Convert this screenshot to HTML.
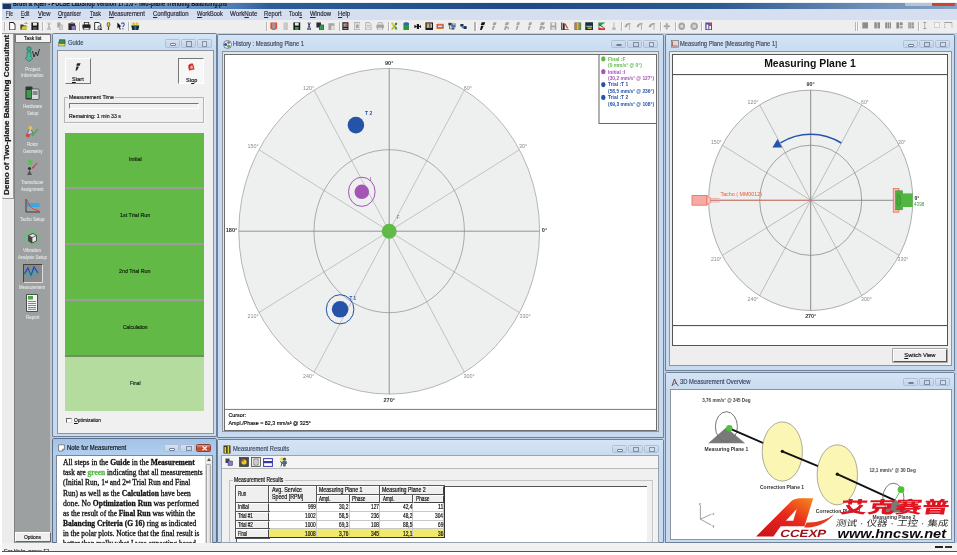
<!DOCTYPE html><html><head><meta charset="utf-8"><title>PULSE LabShop</title><style>
html,body{margin:0;padding:0;background:#fff;}
body{width:957px;height:555px;overflow:hidden;position:relative;font-family:"Liberation Sans",sans-serif;font-size:6px;color:#222;}
.a{position:absolute;}
.t{position:absolute;white-space:nowrap;line-height:1;-webkit-text-stroke:0.18px currentColor;}
#app{position:absolute;left:2px;top:2px;width:955px;height:550px;background:#f0f0f0;overflow:hidden;filter:blur(0.35px);}
#title{left:0;top:0.5px;width:955px;height:6px;background:linear-gradient(90deg,#6c98ca 0%,#6690c4 20%,#4c7ab4 24.5%,#2c5c9a 28%,#1e4a86 55%,#2c5a92 75%,#6a8cb6 90%,#86a2c4 100%);overflow:hidden;}
#menu{left:0;top:6.5px;width:955px;height:11px;background:#d6dff0;}
#menu .t{top:2.2px;font-size:6.2px;color:#1a1a2a;}
#tb{left:0;top:17.5px;width:955px;height:14px;background:#eeeeee;}
#mdi{left:49px;top:31px;width:906px;height:510px;background:#bccfe6;}
.win{position:absolute;background:#c7daef;border:1px solid #6f8197;box-sizing:border-box;border-radius:2px 2px 0 0;}
.win .cap{position:absolute;left:0;right:0;top:0;height:16px;background:linear-gradient(180deg,#d5e4f5 0%,#c9dcf0 100%);}
.win .ttl{position:absolute;left:15px;top:6.5px;font-size:6.2px;color:#44506a;white-space:nowrap;line-height:1;}
.cb{position:absolute;top:5px;width:15px;height:8.6px;border:0.7px solid #aebfd7;background:linear-gradient(180deg,#d3e1f2,#c2d3e8);box-sizing:border-box;border-radius:1.5px;}
.cl{position:absolute;box-sizing:border-box;border:1px solid #8a8f96;background:#fff;}
</style></head><body><div id="app">
<div id="title" class="a"><div class="t" style="left:10.5px;top:-2.2px;font-size:7.20px;color:#0a1020;font-weight:bold;transform:scaleX(0.766);transform-origin:0 0;text-shadow:0 0 1.5px rgba(215,228,245,0.7);">Brüel &amp; Kjær - PULSE LabShop Version 17.1.0 - Two-plane Trending Balancing.pls</div><div class="a" style="left:0.5px;top:1px;width:8px;height:6px;background:#1d3560;"></div><div class="a" style="left:903px;top:0;width:27px;height:3.2px;background:#b4c4da;border-radius:0 0 1px 1px;"></div><div class="a" style="left:930px;top:0;width:23px;height:3.2px;background:#c8472f;border-radius:0 0 1px 1px;"></div></div>
<div id="menu" class="a"><div class="t" style="left:3.5px;top:2.1px;font-size:6.60px;color:#2a2a3a;transform:scaleX(0.658);transform-origin:0 0;"><u>F</u>ile</div><div class="t" style="left:19.3px;top:2.1px;font-size:6.60px;color:#2a2a3a;transform:scaleX(0.730);transform-origin:0 0;"><u>E</u>dit</div><div class="t" style="left:35.6px;top:2.1px;font-size:6.60px;color:#2a2a3a;transform:scaleX(0.874);transform-origin:0 0;"><u>V</u>iew</div><div class="t" style="left:55.7px;top:2.1px;font-size:6.60px;color:#2a2a3a;transform:scaleX(0.797);transform-origin:0 0;"><u>O</u>rganiser</div><div class="t" style="left:87.8px;top:2.1px;font-size:6.60px;color:#2a2a3a;transform:scaleX(0.811);transform-origin:0 0;"><u>T</u>ask</div><div class="t" style="left:107.0px;top:2.1px;font-size:6.60px;color:#2a2a3a;transform:scaleX(0.892);transform-origin:0 0;"><u>M</u>easurement</div><div class="t" style="left:150.5px;top:2.1px;font-size:6.60px;color:#2a2a3a;transform:scaleX(0.904);transform-origin:0 0;"><u>C</u>onfiguration</div><div class="t" style="left:195.0px;top:2.1px;font-size:6.60px;color:#2a2a3a;transform:scaleX(0.848);transform-origin:0 0;"><u>W</u>orkBook</div><div class="t" style="left:227.5px;top:2.1px;font-size:6.60px;color:#2a2a3a;transform:scaleX(0.941);transform-origin:0 0;">Work<u>N</u>ote</div><div class="t" style="left:261.8px;top:2.1px;font-size:6.60px;color:#2a2a3a;transform:scaleX(0.888);transform-origin:0 0;"><u>R</u>eport</div><div class="t" style="left:286.9px;top:2.1px;font-size:6.60px;color:#2a2a3a;transform:scaleX(0.850);transform-origin:0 0;">Tool<u>s</u></div><div class="t" style="left:307.7px;top:2.1px;font-size:6.60px;color:#2a2a3a;transform:scaleX(0.899);transform-origin:0 0;"><u>W</u>indow</div><div class="t" style="left:336.3px;top:2.1px;font-size:6.60px;color:#2a2a3a;transform:scaleX(0.884);transform-origin:0 0;"><u>H</u>elp</div></div>
<div id="tb" class="a"></div>
<div id="mdi" class="a"></div>
<div class="win" style="left:50.0px;top:31.3px;width:165.0px;height:403.8px;"><div class="cap" style=""></div><div class="a" style="left:5px;top:5px;width:8px;height:8px;"><svg width="8" height="8" viewBox="0 0 8 8"><rect x="0.5" y="3" width="6.5" height="4" fill="#e9d94a" stroke="#555" stroke-width="0.5"/><rect x="1.5" y="0.8" width="5.5" height="3.5" fill="#3a8a4a" stroke="#234" stroke-width="0.5"/></svg></div><div class="t" style="left:14.5px;top:6.2px;font-size:6.50px;color:#3e4a63;transform:scaleX(0.894);transform-origin:0 0;">Guide</div><div class="cb" style="left:111.5px;"><div class="a" style="left:4px;top:3.2px;width:6px;height:2.8px;box-sizing:border-box;border:0.7px solid #6f7f9c;border-radius:1px;background:#f4f6fa;"></div></div><div class="cb" style="left:127.5px;"><div class="a" style="left:4.6px;top:1.2px;width:5.6px;height:5.4px;box-sizing:border-box;border:1.1px solid #7f8ca8;background:#cdd6e4;"></div></div><div class="cb" style="left:143.5px;"><div class="a" style="left:4.6px;top:1.2px;width:5.4px;height:5.4px;box-sizing:border-box;border:1.1px solid #8592ac;background:#d6dde8;"></div></div><div class="cl" style="left:3.5px;top:15.7px;width:157.0px;height:384.0px;background:#f0f0f0;border-color:#8d949c;"><div class="a" style="left:7.5px;top:7.5px;width:25.5px;height:25.5px;box-sizing:border-box;border:1px solid;border-color:#fff #777 #777 #fff;background:#f0f0f0;"></div><svg class="a" style="left:16.0px;top:12.0px" width="8" height="9" viewBox="0 0 8 9"><path d="M3.2 0.3 L6.6 0.3 L5.6 2.8 L2.2 2.8 Z M2.6 3.4 L5 3.4 L3 7.6 L1.4 7.6 L2.2 5.2 L1.9 5.2Z" fill="#222"/></svg><div class="t" style="left:14.1px;top:25.2px;font-size:6.20px;color:#111;transform:scaleX(0.894);transform-origin:0 0;"><u>S</u>tart</div><div class="a" style="left:120.5px;top:7.0px;width:26px;height:26px;box-sizing:border-box;border:1px solid;border-color:#777 #fff #fff #777;background:#f7f7f7;"></div><svg class="a" style="left:129.5px;top:12.0px" width="9" height="9" viewBox="0 0 9 9"><path d="M2.5 1 L5.5 0.3 L6.5 2 L7.5 6.5 L2 7.5 L1.2 4 Z" fill="#d8322a"/><path d="M3.4 3 L5.4 2.6 L6 5.6 L3.4 5.8Z" fill="#f4b0a8"/><path d="M1 2.8 L3 2 L3 3.4 Z" fill="#333"/></svg><div class="t" style="left:128.9px;top:25.6px;font-size:6.20px;color:#111;transform:scaleX(0.886);transform-origin:0 0;">St<u>o</u>p</div><div class="a" style="left:6.9px;top:46.0px;width:139.5px;height:26px;box-sizing:border-box;border:1px solid #b5b5b5;box-shadow:0.6px 0.6px 0 #fff;"></div><div class="a" style="left:10.5px;top:43.0px;width:47px;height:6px;background:#f0f0f0;"></div><div class="t" style="left:11.5px;top:42.8px;font-size:6.20px;color:#111;transform:scaleX(0.848);transform-origin:0 0;">Measurement Time</div><div class="a" style="left:11.5px;top:52.0px;width:130px;height:6.5px;box-sizing:border-box;border:1px solid;border-color:#777 #fff #fff #777;background:#f0f0f0;"></div><div class="t" style="left:11.5px;top:62.5px;font-size:6.20px;color:#111;transform:scaleX(0.843);transform-origin:0 0;">Remaining: 1 min 33 s</div><div class="a" style="left:7.7px;top:81.6px;width:139.2px;height:54.4px;background:#62b946;"></div><div class="a" style="left:7.7px;top:136.0px;width:139.2px;height:1.6px;background:#9c9c9c;"></div><div class="t" style="left:71.0px;top:105.9px;font-size:5.80px;color:#10200c;transform:scaleX(0.931);transform-origin:0 0;">Initial</div><div class="a" style="left:7.7px;top:137.6px;width:139.2px;height:54.4px;background:#62b946;"></div><div class="a" style="left:7.7px;top:192.0px;width:139.2px;height:1.6px;background:#9c9c9c;"></div><div class="t" style="left:62.1px;top:161.9px;font-size:5.80px;color:#10200c;transform:scaleX(0.931);transform-origin:0 0;">1st Trial Run</div><div class="a" style="left:7.7px;top:193.6px;width:139.2px;height:54.4px;background:#62b946;"></div><div class="a" style="left:7.7px;top:248.0px;width:139.2px;height:1.6px;background:#9c9c9c;"></div><div class="t" style="left:61.5px;top:217.9px;font-size:5.80px;color:#10200c;transform:scaleX(0.913);transform-origin:0 0;">2nd Trial Run</div><div class="a" style="left:7.7px;top:249.6px;width:139.2px;height:54.4px;background:#62b946;"></div><div class="a" style="left:7.7px;top:304.0px;width:139.2px;height:1.6px;background:#6f8f5c;"></div><div class="t" style="left:65.0px;top:273.9px;font-size:5.80px;color:#10200c;transform:scaleX(0.854);transform-origin:0 0;">Calculation</div><div class="a" style="left:7.7px;top:305.6px;width:139.2px;height:54.4px;background:#b4dc9f;"></div><div class="t" style="left:72.0px;top:329.9px;font-size:5.80px;color:#10200c;transform:scaleX(0.835);transform-origin:0 0;">Final</div><div class="a" style="left:8.5px;top:367.0px;width:5.5px;height:5.5px;box-sizing:border-box;border:1px solid;border-color:#666 #ddd #ddd #666;background:#fff;"></div><div class="t" style="left:16.9px;top:367.0px;font-size:5.80px;color:#111;transform:scaleX(0.838);transform-origin:0 0;"><u>O</u>ptimization</div></div></div>
<div class="win" style="left:215.3px;top:31.5px;width:446.7px;height:404.5px;"><div class="cap" style=""></div><div class="a" style="left:5px;top:5px;width:8px;height:8px;"><svg width="9" height="9" viewBox="0 0 9 9"><circle cx="4.5" cy="4.5" r="4" fill="#eee" stroke="#444" stroke-width="0.6"/><circle cx="2.6" cy="4.6" r="1.5" fill="#2553a8"/><circle cx="5.6" cy="2.6" r="1.4" fill="#a455b5"/><circle cx="5.6" cy="6.3" r="1.5" fill="#3fb050"/></svg></div><div class="t" style="left:14.5px;top:6.2px;font-size:6.50px;color:#3e4a63;transform:scaleX(0.889);transform-origin:0 0;">History : Measuring Plane 1</div><div class="cb" style="left:393.2px;"><div class="a" style="left:4px;top:3.2px;width:6px;height:2.8px;box-sizing:border-box;border:0.7px solid #6f7f9c;border-radius:1px;background:#f4f6fa;"></div></div><div class="cb" style="left:409.2px;"><div class="a" style="left:4.6px;top:1.2px;width:5.6px;height:5.4px;box-sizing:border-box;border:1.1px solid #7f8ca8;background:#cdd6e4;"></div></div><div class="cb" style="left:425.2px;"><div class="a" style="left:4.6px;top:1.2px;width:5.4px;height:5.4px;box-sizing:border-box;border:1.1px solid #8592ac;background:#d6dde8;"></div></div><div class="a" style="left:3.7px;top:16.5px;width:437.5px;height:381.0px;box-sizing:border-box;border:1px solid #8d949c;background:#e4e6e8;"></div><div class="a" style="left:6.2px;top:19.0px;width:433.0px;height:377.0px;box-sizing:border-box;border:1px solid #6e6e6e;border-right-width:1.6px;background:#fff;overflow:hidden;"><svg class="a" style="left:0;top:0" width="431.0" height="375.0" viewBox="225.5 54.5 431.0 375.0" font-family="Liberation Sans, sans-serif"><ellipse cx="389.7" cy="230.7" rx="150.4" ry="162.9" fill="#eeefef" stroke="#9a9a9a" stroke-width="0.7"/><ellipse cx="389.7" cy="230.7" rx="75.2" ry="81.5" fill="none" stroke="#8c8c8c" stroke-width="0.7"/><line x1="389.7" y1="230.7" x2="540.1" y2="230.7" stroke="#8a8a8a" stroke-width="0.9"/><line x1="389.7" y1="230.7" x2="520.0" y2="149.2" stroke="#a4a4a4" stroke-width="0.6"/><line x1="389.7" y1="230.7" x2="464.9" y2="89.6" stroke="#a4a4a4" stroke-width="0.6"/><line x1="389.7" y1="230.7" x2="389.7" y2="67.8" stroke="#8a8a8a" stroke-width="0.9"/><line x1="389.7" y1="230.7" x2="314.5" y2="89.6" stroke="#a4a4a4" stroke-width="0.6"/><line x1="389.7" y1="230.7" x2="259.4" y2="149.2" stroke="#a4a4a4" stroke-width="0.6"/><line x1="389.7" y1="230.7" x2="239.3" y2="230.7" stroke="#8a8a8a" stroke-width="0.9"/><line x1="389.7" y1="230.7" x2="259.4" y2="312.1" stroke="#a4a4a4" stroke-width="0.6"/><line x1="389.7" y1="230.7" x2="314.5" y2="371.8" stroke="#a4a4a4" stroke-width="0.6"/><line x1="389.7" y1="230.7" x2="389.7" y2="393.6" stroke="#8a8a8a" stroke-width="0.9"/><line x1="389.7" y1="230.7" x2="464.9" y2="371.8" stroke="#a4a4a4" stroke-width="0.6"/><line x1="389.7" y1="230.7" x2="520.0" y2="312.2" stroke="#a4a4a4" stroke-width="0.6"/><text x="389.7" y="64.4" font-size="5.6" font-weight="bold" fill="#333" text-anchor="middle">90°</text><text x="309.0" y="89.2" font-size="5.4" fill="#8a8a8a" text-anchor="middle">120°</text><text x="253.7" y="147.8" font-size="5.4" fill="#8a8a8a" text-anchor="middle">150°</text><text x="232.0" y="231.8" font-size="5.6" font-weight="bold" fill="#333" text-anchor="middle">180°</text><text x="253.7" y="317.6" font-size="5.4" fill="#8a8a8a" text-anchor="middle">210°</text><text x="309.0" y="377.0" font-size="5.4" fill="#8a8a8a" text-anchor="middle">240°</text><text x="389.7" y="401.5" font-size="5.6" font-weight="bold" fill="#333" text-anchor="middle">270°</text><text x="469.6" y="377.0" font-size="5.4" fill="#8a8a8a" text-anchor="middle">300°</text><text x="525.5" y="317.6" font-size="5.4" fill="#8a8a8a" text-anchor="middle">330°</text><text x="545.0" y="231.8" font-size="5.6" font-weight="bold" fill="#333" text-anchor="middle">0°</text><text x="523.7" y="147.8" font-size="5.4" fill="#8a8a8a" text-anchor="middle">30°</text><text x="468.3" y="89.2" font-size="5.4" fill="#8a8a8a" text-anchor="middle">60°</text><circle cx="356.4" cy="124.6" r="8.3" fill="#2553a8"/><text x="365.5" y="114" font-size="5" font-weight="bold" fill="#2553a8">T 2</text><ellipse cx="362.3" cy="191.3" rx="13.3" ry="14.6" fill="none" stroke="#a455b5" stroke-width="1"/><circle cx="362.3" cy="191.3" r="7.3" fill="#a455b5"/><text x="370.3" y="180.3" font-size="4.6" font-weight="bold" fill="#a455b5">I</text><circle cx="389.7" cy="230.7" r="7.5" fill="#5fba46"/><text x="397.3" y="218.6" font-size="4.6" font-weight="bold" fill="#5fba46">F</text><ellipse cx="340.6" cy="308.8" rx="13.8" ry="14.6" fill="none" stroke="#2553a8" stroke-width="1"/><circle cx="340.6" cy="308.8" r="8.3" fill="#2553a8"/><text x="350" y="299.3" font-size="4.6" font-weight="bold" fill="#2553a8">T 1</text><rect x="224" y="408.4" width="436" height="1" fill="#777"/><text x="229" y="416.7" font-size="6" fill="#000" stroke="#000" stroke-width="0.15" textLength="17.5" lengthAdjust="spacingAndGlyphs">Cursor:</text><text x="229" y="424.7" font-size="6" fill="#000" stroke="#000" stroke-width="0.15" textLength="82.4" lengthAdjust="spacingAndGlyphs">Ampl./Phase = 82,3 mm/s² @ 325°</text><rect x="599.5" y="50" width="62" height="73" fill="#fff" stroke="#555" stroke-width="0.9"/><ellipse cx="603.8" cy="58.4" rx="2.2" ry="2.6" fill="#5fba46"/><text x="608.5" y="60.1" font-size="4.9" font-weight="bold" fill="#5fba46">Final :F</text><text x="608.5" y="66.5" font-size="4.9" font-weight="bold" fill="#5fba46">(0 mm/s² @ 0°)</text><ellipse cx="603.8" cy="71.2" rx="2.2" ry="2.6" fill="#a455b5"/><text x="608.5" y="73.0" font-size="4.9" font-weight="bold" fill="#a455b5">Initial :I</text><text x="608.5" y="79.3" font-size="4.9" font-weight="bold" fill="#a455b5">(30,2 mm/s² @ 127°)</text><ellipse cx="603.8" cy="84.1" rx="2.2" ry="2.6" fill="#2553a8"/><text x="608.5" y="85.8" font-size="4.9" font-weight="bold" fill="#2553a8">Trial :T 1</text><text x="608.5" y="92.2" font-size="4.9" font-weight="bold" fill="#2553a8">(58,5 mm/s² @ 236°)</text><ellipse cx="603.8" cy="96.9" rx="2.2" ry="2.6" fill="#2553a8"/><text x="608.5" y="98.6" font-size="4.9" font-weight="bold" fill="#2553a8">Trial :T 2</text><text x="608.5" y="105.0" font-size="4.9" font-weight="bold" fill="#2553a8">(69,3 mm/s² @ 108°)</text></svg></div></div>
<div class="win" style="left:662.6px;top:31.8px;width:290.6px;height:337.4px;"><div class="cap" style=""></div><div class="a" style="left:5px;top:5px;width:8px;height:8px;"><svg width="8" height="8" viewBox="0 0 8 8"><rect x="0.4" y="0.6" width="7" height="6.6" fill="#d8d8d8" stroke="#666" stroke-width="0.6"/><path d="M1.5 1.5 V6 H6.5" stroke="#a33" stroke-width="0.7" fill="none"/></svg></div><div class="t" style="left:14.5px;top:6.2px;font-size:6.50px;color:#3e4a63;transform:scaleX(0.893);transform-origin:0 0;">Measuring Plane [Measuring Plane 1]</div><div class="cb" style="left:237.1px;"><div class="a" style="left:4px;top:3.2px;width:6px;height:2.8px;box-sizing:border-box;border:0.7px solid #6f7f9c;border-radius:1px;background:#f4f6fa;"></div></div><div class="cb" style="left:253.1px;"><div class="a" style="left:4.6px;top:1.2px;width:5.6px;height:5.4px;box-sizing:border-box;border:1.1px solid #7f8ca8;background:#cdd6e4;"></div></div><div class="cb" style="left:269.1px;"><div class="a" style="left:4.6px;top:1.2px;width:5.4px;height:5.4px;box-sizing:border-box;border:1.1px solid #8592ac;background:#d6dde8;"></div></div><div class="a" style="left:3.7px;top:16.5px;width:282.3px;height:314.6px;box-sizing:border-box;border:1px solid #8d949c;background:#eeeeee;"></div><div class="a" style="left:6.4px;top:18.8px;width:275.9px;height:292.4px;box-sizing:border-box;border:1px solid #555;background:#fff;overflow:hidden;"><svg class="a" style="left:0;top:0" width="273.9" height="290.4" viewBox="673.0 54.6 273.9 290.4" font-family="Liberation Sans, sans-serif"><text x="810" y="66.3" font-size="10.6" font-weight="bold" fill="#111" text-anchor="middle" textLength="91.7" lengthAdjust="spacingAndGlyphs">Measuring Plane 1</text><rect x="672" y="73.7" width="280" height="1" fill="#444"/><ellipse cx="810.7" cy="199.9" rx="102.1" ry="110.2" fill="#eeefef" stroke="#8e8e8e" stroke-width="0.7"/><ellipse cx="810.7" cy="199.9" rx="51.0" ry="55.1" fill="none" stroke="#808080" stroke-width="0.7"/><line x1="810.7" y1="199.9" x2="912.8" y2="199.9" stroke="#808080" stroke-width="0.9"/><line x1="810.7" y1="199.9" x2="899.1" y2="144.8" stroke="#9a9a9a" stroke-width="0.6"/><line x1="810.7" y1="199.9" x2="861.8" y2="104.5" stroke="#9a9a9a" stroke-width="0.6"/><line x1="810.7" y1="199.9" x2="810.7" y2="89.7" stroke="#808080" stroke-width="0.9"/><line x1="810.7" y1="199.9" x2="759.7" y2="104.5" stroke="#9a9a9a" stroke-width="0.6"/><line x1="810.7" y1="199.9" x2="722.3" y2="144.8" stroke="#9a9a9a" stroke-width="0.6"/><line x1="810.7" y1="199.9" x2="708.6" y2="199.9" stroke="#808080" stroke-width="0.9"/><line x1="810.7" y1="199.9" x2="722.3" y2="255.0" stroke="#9a9a9a" stroke-width="0.6"/><line x1="810.7" y1="199.9" x2="759.6" y2="295.3" stroke="#9a9a9a" stroke-width="0.6"/><line x1="810.7" y1="199.9" x2="810.7" y2="310.1" stroke="#808080" stroke-width="0.9"/><line x1="810.7" y1="199.9" x2="861.8" y2="295.3" stroke="#9a9a9a" stroke-width="0.6"/><line x1="810.7" y1="199.9" x2="899.1" y2="255.0" stroke="#9a9a9a" stroke-width="0.6"/><text x="810.7" y="85.7" font-size="5.4" font-weight="bold" fill="#333" text-anchor="middle">90°</text><text x="753.0" y="103.6" font-size="5.2" fill="#8a8a8a" text-anchor="middle">120°</text><text x="865.0" y="103.6" font-size="5.2" fill="#8a8a8a" text-anchor="middle">60°</text><text x="716.3" y="143.3" font-size="5.2" fill="#8a8a8a" text-anchor="middle">150°</text><text x="902.0" y="143.3" font-size="5.2" fill="#8a8a8a" text-anchor="middle">30°</text><text x="716.3" y="260.4" font-size="5.2" fill="#8a8a8a" text-anchor="middle">210°</text><text x="903.0" y="260.4" font-size="5.2" fill="#8a8a8a" text-anchor="middle">330°</text><text x="753.0" y="300.9" font-size="5.2" fill="#8a8a8a" text-anchor="middle">240°</text><text x="866.4" y="300.9" font-size="5.2" fill="#8a8a8a" text-anchor="middle">300°</text><text x="810.7" y="317.6" font-size="5.4" font-weight="bold" fill="#333" text-anchor="middle">270°</text><line x1="719.6" y1="199.9" x2="810.7" y2="199.9" stroke="#ee6a58" stroke-width="0.7"/><rect x="692" y="195" width="15" height="9.8" fill="#f6aaa4" stroke="#ee6a58" stroke-width="0.8"/><path d="M707 195.6 L710.6 197.6 L710.6 202.2 L707 204.2 Z" fill="#f8c4be" stroke="#ee6a58" stroke-width="0.6"/><line x1="710.6" y1="198.2" x2="719.6" y2="198.2" stroke="#ee6a58" stroke-width="0.5"/><line x1="710.6" y1="199.9" x2="719.6" y2="199.9" stroke="#ee6a58" stroke-width="0.5"/><line x1="710.6" y1="201.6" x2="719.6" y2="201.6" stroke="#ee6a58" stroke-width="0.5"/><text x="720.5" y="195.8" font-size="5" fill="#ee5a3c" textLength="41.5" lengthAdjust="spacingAndGlyphs">Tacho ( MM0012)</text><path d="M841.3 142.6 A61.3 66.1 0 0 0 780.5 142.4" fill="none" stroke="#2453b0" stroke-width="1.5"/><path d="M772.4 147 L782.2 147.2 L777.6 138.6 Z" fill="#2453b0"/><rect x="893.3" y="188.2" width="5.6" height="23.6" fill="#f8c0ba" stroke="#ee6a58" stroke-width="0.8"/><rect x="895.6" y="190.4" width="7" height="19" fill="#4cae3c" stroke="#3a8a30" stroke-width="0.5"/><rect x="901.5" y="193" width="11.2" height="13.6" fill="#52b642"/><ellipse cx="898.6" cy="199.9" rx="1.6" ry="5.6" fill="none" stroke="#2f7a2a" stroke-width="0.5"/><text x="914.6" y="199.6" font-size="5" font-weight="bold" fill="#222">0°</text><text x="914" y="205.3" font-size="5" fill="#3a9a3a" textLength="10.4" lengthAdjust="spacingAndGlyphs">4398</text><rect x="672" y="324.7" width="280" height="1" fill="#444"/></svg></div><div class="a" style="left:227.2px;top:314.7px;width:54.2px;height:12.7px;box-sizing:border-box;border:1px solid;border-color:#fff #555 #555 #fff;background:#efefef;box-shadow:0 0 0 0.6px #777;"></div><div class="t" style="left:227.2px;top:318.4px;width:54.2px;text-align:center;font-size:5.8px;color:#111;"><u>S</u>witch View</div></div>
<div class="win" style="left:662.6px;top:369.5px;width:290.6px;height:171.7px;"><div class="cap" style=""></div><div class="a" style="left:5px;top:5px;width:8px;height:8px;"><svg width="8" height="9" viewBox="0 0 8 9"><path d="M1 8 L3.5 1 L5 5 L7.5 8" stroke="#333" stroke-width="0.8" fill="none"/><path d="M2 6.5 L6 4.5" stroke="#c33" stroke-width="0.8"/></svg></div><div class="t" style="left:14.5px;top:6.2px;font-size:6.50px;color:#3e4a63;transform:scaleX(0.896);transform-origin:0 0;">3D Measurement Overview</div><div class="cb" style="left:237.1px;"><div class="a" style="left:4px;top:3.2px;width:6px;height:2.8px;box-sizing:border-box;border:0.7px solid #6f7f9c;border-radius:1px;background:#f4f6fa;"></div></div><div class="cb" style="left:253.1px;"><div class="a" style="left:4.6px;top:1.2px;width:5.6px;height:5.4px;box-sizing:border-box;border:1.1px solid #7f8ca8;background:#cdd6e4;"></div></div><div class="cb" style="left:269.1px;"><div class="a" style="left:4.6px;top:1.2px;width:5.4px;height:5.4px;box-sizing:border-box;border:1.1px solid #8592ac;background:#d6dde8;"></div></div><div class="a" style="left:4.0px;top:16.3px;width:282.0px;height:150.8px;box-sizing:border-box;border:1px solid #8d949c;background:#fff;overflow:hidden;"><svg class="a" style="left:0;top:0" width="280.0" height="148.8" viewBox="670.6 389.8 280.0 148.8" font-family="Liberation Sans, sans-serif"><ellipse cx="726" cy="426.5" rx="11" ry="15" fill="none" stroke="#555" stroke-width="0.8"/><path d="M725.8 427.2 L707.8 443 L744.7 443 Z" fill="#6e6e6e" opacity="0.92"/><line x1="729" y1="428.2" x2="781.9" y2="451.1" stroke="#111" stroke-width="1.9"/><ellipse cx="781.9" cy="451.3" rx="20.1" ry="29.6" fill="#fbf6b4" stroke="#8a8a7a" stroke-width="0.7"/><line x1="781.9" y1="451.1" x2="836.9" y2="474" stroke="#111" stroke-width="1.9"/><circle cx="781.9" cy="451.1" r="1.6" fill="#111"/><ellipse cx="836.9" cy="474.6" rx="20.2" ry="30" fill="#fbf6b4" stroke="#8a8a7a" stroke-width="0.7"/><line x1="836.9" y1="474" x2="895" y2="500.4" stroke="#111" stroke-width="1.9"/><circle cx="836.9" cy="474" r="1.6" fill="#111"/><circle cx="728.9" cy="428.1" r="3.2" fill="#4fc03a"/><ellipse cx="893" cy="497.5" rx="10.5" ry="14.5" fill="none" stroke="#555" stroke-width="0.8"/><path d="M895 499 L881.5 512 L908.5 512 Z" fill="#7a7a7a"/><line x1="900.6" y1="489.4" x2="895" y2="499" stroke="#4fc03a" stroke-width="0.9"/><circle cx="900.6" cy="489.4" r="3.4" fill="#4fc03a"/><text x="701.8" y="401.6" font-size="4.8" font-weight="bold" fill="#444" textLength="48.3" lengthAdjust="spacingAndGlyphs">3,76 mm/s² @ 345 Deg</text><text x="704.2" y="451.0" font-size="5.0" font-weight="bold" fill="#333" textLength="43.6" lengthAdjust="spacingAndGlyphs">Measuring Plane 1</text><text x="759.6" y="489.0" font-size="5.0" font-weight="bold" fill="#333" textLength="44.1" lengthAdjust="spacingAndGlyphs">Correction Plane 1</text><text x="815.4" y="512.7" font-size="5.0" font-weight="bold" fill="#333" textLength="44.6" lengthAdjust="spacingAndGlyphs">Correction Plane 2</text><text x="869.0" y="472.1" font-size="4.8" font-weight="bold" fill="#444" textLength="46.4" lengthAdjust="spacingAndGlyphs">12,1 mm/s² @ 30 Deg</text><text x="872.0" y="519.0" font-size="5.0" font-weight="bold" fill="#333" textLength="43.0" lengthAdjust="spacingAndGlyphs">Measuring Plane 2</text><path d="M700 505 L700 519 L711 525 M700 519 L711 514" fill="none" stroke="#777" stroke-width="0.7"/><text x="698.6" y="504.6" font-size="3.6" fill="#444">z</text><text x="712" y="515" font-size="3.6" fill="#444">x</text><text x="712" y="527" font-size="3.6" fill="#444">y</text></svg></div></div>
<div class="win" style="left:49.8px;top:435.8px;width:165.2px;height:105.4px;background:#adcaeb;border-color:#5d6f86;"><div class="cap" style="background:linear-gradient(180deg,#a2c2e8,#b2cfee)"></div><div class="a" style="left:5px;top:5px;width:8px;height:8px;"><svg width="8" height="8" viewBox="0 0 8 8"><path d="M0.6 0.8 H6.4 V5 L4.6 7 H0.6 Z" fill="#fff" stroke="#444" stroke-width="0.6"/><path d="M4.6 7 V5 H6.4" fill="#e8c84a" stroke="#444" stroke-width="0.5"/></svg></div><div class="t" style="left:14.5px;top:6.2px;font-size:6.50px;color:#101010;transform:scaleX(0.915);transform-origin:0 0;">Note for Measurement</div><div class="cb" style="left:111.7px;"><div class="a" style="left:4px;top:3.2px;width:6px;height:2.8px;box-sizing:border-box;border:0.7px solid #6f7f9c;border-radius:1px;background:#f4f6fa;"></div></div><div class="cb" style="left:127.7px;"><div class="a" style="left:4.6px;top:1.2px;width:5.6px;height:5.4px;box-sizing:border-box;border:1.1px solid #7f8ca8;background:#cdd6e4;"></div></div><div class="cb" style="left:143.7px;background:linear-gradient(180deg,#e39a88,#c9402a 55%,#d0583c);border-color:#8a4038;"><svg class="a" style="left:4.2px;top:1.6px" width="5.5" height="4.6" viewBox="0 0 6 5"><path d="M0.6 0.4 L5.4 4.6 M5.4 0.4 L0.6 4.6" stroke="#fff" stroke-width="1.3"/></svg></div><div class="a" style="left:3.4px;top:16.2px;width:157.0px;height:89.2px;box-sizing:border-box;border:1px solid #7d8894;background:#fff;overflow:hidden;"><div class="t" style="left:6.3px;top:3.2px;font-size:7.45px;font-family:'Liberation Serif',serif;color:#101010;-webkit-text-stroke:0.28px #101010;transform:scaleX(1.012);transform-origin:0 0;">All steps in the <b>Guide</b> in the <b>Measurement</b></div><div class="t" style="left:6.3px;top:13.4px;font-size:7.45px;font-family:'Liberation Serif',serif;color:#101010;-webkit-text-stroke:0.28px #101010;transform:scaleX(0.993);transform-origin:0 0;">task are <b style="color:#58b848;-webkit-text-stroke:0.28px #58b848">green</b> indicating that all measurements</div><div class="t" style="left:6.3px;top:23.5px;font-size:7.45px;font-family:'Liberation Serif',serif;color:#101010;-webkit-text-stroke:0.28px #101010;transform:scaleX(0.999);transform-origin:0 0;">(Initial Run, 1<sup style="font-size:60%;line-height:0;vertical-align:2.4px">st</sup> and 2<sup style="font-size:60%;line-height:0;vertical-align:2.4px">nd</sup> Trial Run and Final</div><div class="t" style="left:6.3px;top:33.7px;font-size:7.45px;font-family:'Liberation Serif',serif;color:#101010;-webkit-text-stroke:0.28px #101010;transform:scaleX(1.006);transform-origin:0 0;">Run) as well as the <b>Calculation</b> have been</div><div class="t" style="left:6.3px;top:43.8px;font-size:7.45px;font-family:'Liberation Serif',serif;color:#101010;-webkit-text-stroke:0.28px #101010;transform:scaleX(1.021);transform-origin:0 0;">done. No <b>Optimization Run</b> was performed</div><div class="t" style="left:6.3px;top:54.0px;font-size:7.45px;font-family:'Liberation Serif',serif;color:#101010;-webkit-text-stroke:0.28px #101010;transform:scaleX(0.990);transform-origin:0 0;">as the result of the <b>Final Run</b> was within the</div><div class="t" style="left:6.3px;top:64.1px;font-size:7.45px;font-family:'Liberation Serif',serif;color:#101010;-webkit-text-stroke:0.28px #101010;transform:scaleX(1.008);transform-origin:0 0;"><b>Balancing Criteria (G 16)</b> ring as indicated</div><div class="t" style="left:6.3px;top:74.2px;font-size:7.45px;font-family:'Liberation Serif',serif;color:#101010;-webkit-text-stroke:0.28px #101010;transform:scaleX(0.986);transform-origin:0 0;">in the polar plots. Notice that the final result is</div><div class="t" style="left:6.3px;top:84.4px;font-size:7.45px;font-family:'Liberation Serif',serif;color:#101010;-webkit-text-stroke:0.28px #101010;transform:scaleX(0.991);transform-origin:0 0;">better than really what I was expecting based</div><div class="a" style="left:148.0px;top:0.0px;width:7.2px;height:90px;background:#ececec;border-left:0.6px solid #d8d8d8;"></div><svg class="a" style="left:149.8px;top:2.0px" width="4" height="3" viewBox="0 0 4 3"><path d="M0 3 L2 0 L4 3Z" fill="#555"/></svg><div class="a" style="left:149.0px;top:8.5px;width:5.2px;height:90px;background:linear-gradient(90deg,#f4f4f4,#d6d6d6);border:0.6px solid #a8a8a8;border-radius:1px;box-sizing:border-box;"></div></div></div>
<div class="win" style="left:215.3px;top:436.8px;width:447.1px;height:104.4px;"><div class="cap" style=""></div><div class="a" style="left:5px;top:5px;width:8px;height:8px;"><svg width="8" height="9" viewBox="0 0 8 9"><rect x="0.5" y="0.5" width="7" height="8" fill="#333"/><rect x="1.5" y="2" width="1.6" height="6" fill="#e8d020"/><rect x="4.6" y="1" width="1.6" height="7" fill="#e8d020"/></svg></div><div class="t" style="left:14.5px;top:6.2px;font-size:6.50px;color:#3e4a63;transform:scaleX(0.886);transform-origin:0 0;">Measurement Results</div><div class="cb" style="left:393.6px;"><div class="a" style="left:4px;top:3.2px;width:6px;height:2.8px;box-sizing:border-box;border:0.7px solid #6f7f9c;border-radius:1px;background:#f4f6fa;"></div></div><div class="cb" style="left:409.6px;"><div class="a" style="left:4.6px;top:1.2px;width:5.6px;height:5.4px;box-sizing:border-box;border:1.1px solid #7f8ca8;background:#cdd6e4;"></div></div><div class="cb" style="left:425.6px;"><div class="a" style="left:4.6px;top:1.2px;width:5.4px;height:5.4px;box-sizing:border-box;border:1.1px solid #8592ac;background:#d6dde8;"></div></div><div class="a" style="left:2.7px;top:15.2px;width:438.5px;height:88.0px;box-sizing:border-box;border:0.6px solid #9aa4b0;background:#f0f0f0;overflow:hidden;"><div class="a" style="left:-0.1px;top:-0.1px;width:437.5px;height:12.3px;background:#f4f4f4;border-bottom:0.8px solid #b8b8b8;"></div><div class="a" style="left:3.4px;top:2.4px;"><svg width="8" height="8" viewBox="0 0 8 8"><rect x="0.5" y="0.5" width="4" height="4.5" fill="#445" /><rect x="3" y="3" width="4.5" height="4.5" fill="#8a78c8" stroke="#334" stroke-width="0.5"/></svg></div><div class="a" style="left:16.9px;top:1.4px;"><svg width="10" height="10" viewBox="0 0 10 10"><rect x="0.5" y="0.5" width="9" height="9" fill="#4a4a4a" stroke="#222" stroke-width="0.6"/><circle cx="5" cy="5" r="2.6" fill="#e8d020"/><circle cx="3.6" cy="3.4" r="1.3" fill="#e05030"/></svg></div><div class="a" style="left:28.9px;top:1.4px;"><svg width="10" height="10" viewBox="0 0 10 10"><rect x="0.5" y="0.5" width="9" height="9" fill="#e8e8e8" stroke="#333" stroke-width="0.7"/><rect x="3" y="2" width="4" height="6" fill="#fff" stroke="#333" stroke-width="0.6"/><path d="M4 4 H6 M4 6 H6" stroke="#333" stroke-width="0.5"/></svg></div><div class="a" style="left:41.4px;top:1.9px;"><svg width="10" height="9" viewBox="0 0 10 9"><rect x="0.6" y="0.6" width="8.8" height="7.8" fill="#fff" stroke="#3838a8" stroke-width="1"/><rect x="0.6" y="3" width="8.8" height="2.2" fill="#3838a8"/></svg></div><div class="a" style="left:56.9px;top:1.4px;"><svg width="9" height="10" viewBox="0 0 9 10"><circle cx="2.8" cy="2" r="1.7" fill="#e8e040"/><circle cx="5.5" cy="2.2" r="1.6" fill="#555"/><path d="M3.5 4 H7.5 L8 7 H6.8 L6.6 9.6 H4.2 L4 7 H3Z" fill="#4a6a78"/><path d="M1 4.5 L3 5.5 L2 9.5" stroke="#333" stroke-width="0.8" fill="none"/></svg></div><div class="a" style="left:7.2px;top:24.4px;width:424px;height:80px;box-sizing:border-box;border:0.8px solid #c4c4c4;box-shadow:0.6px 0.6px 0 #fff;"></div><div class="a" style="left:10.9px;top:20.4px;width:52px;height:7px;background:#f0f0f0;"></div><div class="t" style="left:12.2px;top:20.6px;font-size:6.30px;color:#0a0a0a;transform:scaleX(0.806);transform-origin:0 0;">Measurement Results</div><div class="a" style="left:13.6px;top:29.6px;width:411px;height:70px;box-sizing:border-box;border-top:0.9px solid #555;border-left:0.9px solid #555;background:#fff;"></div><div class="a" style="left:14.0px;top:29.9px;width:33.3px;height:17.1px;box-sizing:border-box;background:#efefef;border:0.7px solid;border-color:#fff #444 #444 #fff;outline:0.4px solid #555;"></div><div class="a" style="left:47.3px;top:29.9px;width:47.7px;height:17.1px;box-sizing:border-box;background:#efefef;border:0.7px solid;border-color:#fff #444 #444 #fff;outline:0.4px solid #555;"></div><div class="a" style="left:95.0px;top:29.9px;width:63.4px;height:8.8px;box-sizing:border-box;background:#efefef;border:0.7px solid;border-color:#fff #444 #444 #fff;outline:0.4px solid #555;"></div><div class="a" style="left:158.4px;top:29.9px;width:63.7px;height:8.8px;box-sizing:border-box;background:#efefef;border:0.7px solid;border-color:#fff #444 #444 #fff;outline:0.4px solid #555;"></div><div class="a" style="left:95.0px;top:38.7px;width:32.6px;height:8.3px;box-sizing:border-box;background:#efefef;border:0.7px solid;border-color:#fff #444 #444 #fff;outline:0.4px solid #555;"></div><div class="a" style="left:127.6px;top:38.7px;width:30.8px;height:8.3px;box-sizing:border-box;background:#efefef;border:0.7px solid;border-color:#fff #444 #444 #fff;outline:0.4px solid #555;"></div><div class="a" style="left:158.4px;top:38.7px;width:33.1px;height:8.3px;box-sizing:border-box;background:#efefef;border:0.7px solid;border-color:#fff #444 #444 #fff;outline:0.4px solid #555;"></div><div class="a" style="left:191.5px;top:38.7px;width:30.6px;height:8.3px;box-sizing:border-box;background:#efefef;border:0.7px solid;border-color:#fff #444 #444 #fff;outline:0.4px solid #555;"></div><div class="a" style="left:14.0px;top:47.0px;width:33.3px;height:8.8px;box-sizing:border-box;background:#efefef;border:0.7px solid;border-color:#fff #444 #444 #fff;outline:0.4px solid #555;"></div><div class="a" style="left:47.3px;top:47.0px;width:47.7px;height:8.8px;box-sizing:border-box;background:#fff;border-right:0.5px solid #c8c8c8;border-bottom:0.5px solid #c8c8c8;"></div><div class="t" style="left:86.1px;top:48.5px;font-size:6.30px;color:#0a0a0a;transform:scaleX(0.756);transform-origin:0 0;">999</div><div class="a" style="left:95.0px;top:47.0px;width:32.6px;height:8.8px;box-sizing:border-box;background:#fff;border-right:0.5px solid #c8c8c8;border-bottom:0.5px solid #c8c8c8;"></div><div class="t" style="left:117.2px;top:48.5px;font-size:6.30px;color:#0a0a0a;transform:scaleX(0.763);transform-origin:0 0;">30,2</div><div class="a" style="left:127.6px;top:47.0px;width:30.8px;height:8.8px;box-sizing:border-box;background:#fff;border-right:0.5px solid #c8c8c8;border-bottom:0.5px solid #c8c8c8;"></div><div class="t" style="left:149.5px;top:48.5px;font-size:6.30px;color:#0a0a0a;transform:scaleX(0.756);transform-origin:0 0;">127</div><div class="a" style="left:158.4px;top:47.0px;width:33.1px;height:8.8px;box-sizing:border-box;background:#fff;border-right:0.5px solid #c8c8c8;border-bottom:0.5px solid #c8c8c8;"></div><div class="t" style="left:181.2px;top:48.5px;font-size:6.30px;color:#0a0a0a;transform:scaleX(0.763);transform-origin:0 0;">42,4</div><div class="a" style="left:191.5px;top:47.0px;width:30.6px;height:8.8px;box-sizing:border-box;background:#fff;border-right:0.5px solid #c8c8c8;border-bottom:0.5px solid #c8c8c8;"></div><div class="t" style="left:215.8px;top:48.5px;font-size:6.30px;color:#0a0a0a;transform:scaleX(0.810);transform-origin:0 0;">11</div><div class="t" style="left:16.4px;top:48.5px;font-size:6.30px;color:#0a0a0a;transform:scaleX(0.734);transform-origin:0 0;">Initial</div><div class="a" style="left:14.0px;top:55.8px;width:33.3px;height:8.8px;box-sizing:border-box;background:#efefef;border:0.7px solid;border-color:#fff #444 #444 #fff;outline:0.4px solid #555;"></div><div class="a" style="left:47.3px;top:55.8px;width:47.7px;height:8.8px;box-sizing:border-box;background:#fff;border-right:0.5px solid #c8c8c8;border-bottom:0.5px solid #c8c8c8;"></div><div class="t" style="left:83.4px;top:57.3px;font-size:6.30px;color:#0a0a0a;transform:scaleX(0.756);transform-origin:0 0;">1002</div><div class="a" style="left:95.0px;top:55.8px;width:32.6px;height:8.8px;box-sizing:border-box;background:#fff;border-right:0.5px solid #c8c8c8;border-bottom:0.5px solid #c8c8c8;"></div><div class="t" style="left:117.2px;top:57.3px;font-size:6.30px;color:#0a0a0a;transform:scaleX(0.763);transform-origin:0 0;">58,5</div><div class="a" style="left:127.6px;top:55.8px;width:30.8px;height:8.8px;box-sizing:border-box;background:#fff;border-right:0.5px solid #c8c8c8;border-bottom:0.5px solid #c8c8c8;"></div><div class="t" style="left:149.5px;top:57.3px;font-size:6.30px;color:#0a0a0a;transform:scaleX(0.756);transform-origin:0 0;">236</div><div class="a" style="left:158.4px;top:55.8px;width:33.1px;height:8.8px;box-sizing:border-box;background:#fff;border-right:0.5px solid #c8c8c8;border-bottom:0.5px solid #c8c8c8;"></div><div class="t" style="left:181.2px;top:57.3px;font-size:6.30px;color:#0a0a0a;transform:scaleX(0.763);transform-origin:0 0;">48,2</div><div class="a" style="left:191.5px;top:55.8px;width:30.6px;height:8.8px;box-sizing:border-box;background:#fff;border-right:0.5px solid #c8c8c8;border-bottom:0.5px solid #c8c8c8;"></div><div class="t" style="left:213.2px;top:57.3px;font-size:6.30px;color:#0a0a0a;transform:scaleX(0.756);transform-origin:0 0;">304</div><div class="t" style="left:16.4px;top:57.3px;font-size:6.30px;color:#0a0a0a;transform:scaleX(0.703);transform-origin:0 0;">Trial #1</div><div class="a" style="left:14.0px;top:64.6px;width:33.3px;height:8.7px;box-sizing:border-box;background:#efefef;border:0.7px solid;border-color:#fff #444 #444 #fff;outline:0.4px solid #555;"></div><div class="a" style="left:47.3px;top:64.6px;width:47.7px;height:8.7px;box-sizing:border-box;background:#fff;border-right:0.5px solid #c8c8c8;border-bottom:0.5px solid #c8c8c8;"></div><div class="t" style="left:83.4px;top:66.1px;font-size:6.30px;color:#0a0a0a;transform:scaleX(0.756);transform-origin:0 0;">1000</div><div class="a" style="left:95.0px;top:64.6px;width:32.6px;height:8.7px;box-sizing:border-box;background:#fff;border-right:0.5px solid #c8c8c8;border-bottom:0.5px solid #c8c8c8;"></div><div class="t" style="left:117.2px;top:66.1px;font-size:6.30px;color:#0a0a0a;transform:scaleX(0.763);transform-origin:0 0;">69,3</div><div class="a" style="left:127.6px;top:64.6px;width:30.8px;height:8.7px;box-sizing:border-box;background:#fff;border-right:0.5px solid #c8c8c8;border-bottom:0.5px solid #c8c8c8;"></div><div class="t" style="left:149.5px;top:66.1px;font-size:6.30px;color:#0a0a0a;transform:scaleX(0.756);transform-origin:0 0;">108</div><div class="a" style="left:158.4px;top:64.6px;width:33.1px;height:8.7px;box-sizing:border-box;background:#fff;border-right:0.5px solid #c8c8c8;border-bottom:0.5px solid #c8c8c8;"></div><div class="t" style="left:181.2px;top:66.1px;font-size:6.30px;color:#0a0a0a;transform:scaleX(0.763);transform-origin:0 0;">88,5</div><div class="a" style="left:191.5px;top:64.6px;width:30.6px;height:8.7px;box-sizing:border-box;background:#fff;border-right:0.5px solid #c8c8c8;border-bottom:0.5px solid #c8c8c8;"></div><div class="t" style="left:215.8px;top:66.1px;font-size:6.30px;color:#0a0a0a;transform:scaleX(0.756);transform-origin:0 0;">69</div><div class="t" style="left:16.4px;top:66.1px;font-size:6.30px;color:#0a0a0a;transform:scaleX(0.712);transform-origin:0 0;">Trial #2</div><div class="a" style="left:14.0px;top:73.3px;width:33.3px;height:8.3px;box-sizing:border-box;background:#efefef;border:0.7px solid;border-color:#fff #444 #444 #fff;outline:0.4px solid #555;"></div><div class="a" style="left:47.3px;top:73.3px;width:47.7px;height:8.3px;box-sizing:border-box;background:#f1e96c;border-right:0.5px solid #c8c8c8;border-bottom:0.5px solid #c8c8c8;"></div><div class="t" style="left:83.4px;top:74.8px;font-size:6.30px;color:#0a0a0a;transform:scaleX(0.756);transform-origin:0 0;">1008</div><div class="a" style="left:95.0px;top:73.3px;width:32.6px;height:8.3px;box-sizing:border-box;background:#f1e96c;border-right:0.5px solid #c8c8c8;border-bottom:0.5px solid #c8c8c8;"></div><div class="t" style="left:117.2px;top:74.8px;font-size:6.30px;color:#0a0a0a;transform:scaleX(0.763);transform-origin:0 0;">3,76</div><div class="a" style="left:127.6px;top:73.3px;width:30.8px;height:8.3px;box-sizing:border-box;background:#f1e96c;border-right:0.5px solid #c8c8c8;border-bottom:0.5px solid #c8c8c8;"></div><div class="t" style="left:149.5px;top:74.8px;font-size:6.30px;color:#0a0a0a;transform:scaleX(0.756);transform-origin:0 0;">345</div><div class="a" style="left:158.4px;top:73.3px;width:33.1px;height:8.3px;box-sizing:border-box;background:#f1e96c;border-right:0.5px solid #c8c8c8;border-bottom:0.5px solid #c8c8c8;"></div><div class="t" style="left:181.2px;top:74.8px;font-size:6.30px;color:#0a0a0a;transform:scaleX(0.763);transform-origin:0 0;">12,1</div><div class="a" style="left:191.5px;top:73.3px;width:30.6px;height:8.3px;box-sizing:border-box;background:#f1e96c;border-right:0.5px solid #c8c8c8;border-bottom:0.5px solid #c8c8c8;"></div><div class="t" style="left:215.8px;top:74.8px;font-size:6.30px;color:#0a0a0a;transform:scaleX(0.756);transform-origin:0 0;">36</div><div class="t" style="left:16.4px;top:74.8px;font-size:6.30px;color:#0a0a0a;transform:scaleX(0.659);transform-origin:0 0;">Final</div><div class="a" style="left:14.0px;top:29.9px;width:208.6px;height:52.2px;box-sizing:border-box;border-right:0.9px solid #333;border-bottom:0.9px solid #333;"></div><div class="t" style="left:16.4px;top:35.4px;font-size:6.30px;color:#0a0a0a;transform:scaleX(0.718);transform-origin:0 0;">Run</div><div class="t" style="left:49.6px;top:31.4px;font-size:6.30px;color:#0a0a0a;transform:scaleX(0.854);transform-origin:0 0;">Avg. Service</div><div class="t" style="left:49.6px;top:37.8px;font-size:6.30px;color:#0a0a0a;transform:scaleX(0.835);transform-origin:0 0;">Speed [RPM]</div><div class="t" style="left:96.7px;top:31.0px;font-size:6.30px;color:#0a0a0a;transform:scaleX(0.826);transform-origin:0 0;">Measuring Plane 1</div><div class="t" style="left:160.2px;top:31.0px;font-size:6.30px;color:#0a0a0a;transform:scaleX(0.834);transform-origin:0 0;">Measuring Plane 2</div><div class="t" style="left:97.4px;top:39.6px;font-size:6.30px;color:#0a0a0a;transform:scaleX(0.714);transform-origin:0 0;">Ampl.</div><div class="t" style="left:129.8px;top:39.6px;font-size:6.30px;color:#0a0a0a;transform:scaleX(0.756);transform-origin:0 0;">Phase</div><div class="t" style="left:160.6px;top:39.6px;font-size:6.30px;color:#0a0a0a;transform:scaleX(0.714);transform-origin:0 0;">Ampl.</div><div class="t" style="left:193.6px;top:39.6px;font-size:6.30px;color:#0a0a0a;transform:scaleX(0.756);transform-origin:0 0;">Phase</div></div></div>
<div class="a" style="left:0;top:31px;width:11.5px;height:166px;box-sizing:border-box;background:#f2f2f2;border:0.7px solid #9a9a9a;border-left:none;border-radius:0 0 0 2px;"></div><div class="a" style="left:0;top:197px;width:12px;height:345px;background:#ececec;"></div><div class="a" style="left:11.5px;top:31px;width:0.8px;height:511px;background:#b0b0b0;"></div><div class="t" style="left:2.2px;top:193px;font-size:6.6px;font-weight:bold;color:#1a1a1a;transform-origin:0 0;transform:rotate(-90deg) scaleX(1.234);">Demo of Two-plane Balancing Consultant</div><div class="a" style="left:11.5px;top:31px;width:36.5px;height:511px;background:#9da0a1;box-sizing:border-box;border-left:1.2px solid #7e8283;"></div><div class="a" style="left:48px;top:31px;width:2.4px;height:511px;background:#c4c6c8;"></div><div class="a" style="left:12.5px;top:31.5px;width:36px;height:9.5px;box-sizing:border-box;background:#f4f4f4;border:0.7px solid #777;"></div><div class="t" style="left:21.5px;top:33.6px;font-size:5.80px;color:#111;transform:scaleX(0.848);transform-origin:0 0;">Task list</div><div class="a" style="left:12.5px;top:530px;width:36px;height:10px;box-sizing:border-box;background:#efefef;border:0.7px solid;border-color:#fff #666 #666 #fff;"></div><div class="t" style="left:22.0px;top:532.5px;font-size:5.80px;color:#111;transform:scaleX(0.850);transform-origin:0 0;">Options</div><div class="t" style="left:22.6px;top:64.6px;font-size:5.40px;color:#dedede;transform:scaleX(0.922);transform-origin:0 0;">Project</div><div class="t" style="left:19.1px;top:71.4px;font-size:5.40px;color:#dedede;transform:scaleX(0.833);transform-origin:0 0;">Information</div><div class="t" style="left:20.8px;top:102.4px;font-size:5.40px;color:#dedede;transform:scaleX(0.812);transform-origin:0 0;">Hardware</div><div class="t" style="left:24.6px;top:109.2px;font-size:5.40px;color:#dedede;transform:scaleX(0.815);transform-origin:0 0;">Setup</div><div class="t" style="left:24.8px;top:140.3px;font-size:5.40px;color:#dedede;transform:scaleX(0.833);transform-origin:0 0;">Rotor</div><div class="t" style="left:20.6px;top:147.0px;font-size:5.40px;color:#dedede;transform:scaleX(0.823);transform-origin:0 0;">Geometry</div><div class="t" style="left:19.1px;top:177.6px;font-size:5.40px;color:#dedede;transform:scaleX(0.830);transform-origin:0 0;">Transducer</div><div class="t" style="left:19.1px;top:184.9px;font-size:5.40px;color:#dedede;transform:scaleX(0.797);transform-origin:0 0;">Assignment</div><div class="t" style="left:18.1px;top:214.6px;font-size:5.40px;color:#dedede;transform:scaleX(0.816);transform-origin:0 0;">Tacho Setup</div><div class="t" style="left:21.3px;top:246.4px;font-size:5.40px;color:#dedede;transform:scaleX(0.848);transform-origin:0 0;">Vibration</div><div class="t" style="left:15.8px;top:253.2px;font-size:5.40px;color:#dedede;transform:scaleX(0.812);transform-origin:0 0;">Analysis Setup</div><div class="t" style="left:17.3px;top:283.4px;font-size:5.40px;color:#dedede;transform:scaleX(0.788);transform-origin:0 0;">Measurement</div><div class="t" style="left:23.6px;top:313.4px;font-size:5.40px;color:#dedede;transform:scaleX(0.833);transform-origin:0 0;">Report</div><svg class="a" style="left:21.0px;top:44.0px" width="18" height="16" viewBox="0 0 18 16"><circle cx="6" cy="3" r="2.3" fill="#3aa888" stroke="#1a5a48" stroke-width="0.5"/><path d="M4 6 H8 V11 L10 12.5 L6 15.5 L2 12.5 L4 11Z" fill="#48b898" stroke="#1a5a48" stroke-width="0.5"/><path d="M9.5 5 L11 11 L13 6 L14.5 10 L16.5 3" stroke="#222" stroke-width="0.9" fill="none"/></svg><svg class="a" style="left:22.0px;top:83.0px" width="16" height="16" viewBox="0 0 16 16"><rect x="1.5" y="1.5" width="7" height="13" rx="1" fill="#333"/><rect x="2.5" y="5" width="5" height="8" fill="#3c9a48"/><rect x="7.5" y="4" width="7.5" height="10.5" rx="1" fill="#d8d8d8" stroke="#333" stroke-width="0.7"/><rect x="8.6" y="6" width="5" height="4" fill="#888"/></svg><svg class="a" style="left:22.0px;top:122.0px" width="16" height="15" viewBox="0 0 16 15"><path d="M2 12 L6 4 L9 9 Z" fill="#c8c8d8" stroke="#444" stroke-width="0.6"/><circle cx="6.5" cy="4" r="2" fill="#e8c040"/><path d="M8 12 L14 5" stroke="#48b048" stroke-width="1.6"/><circle cx="4" cy="11.5" r="2" fill="#d04848"/></svg><svg class="a" style="left:22.0px;top:157.0px" width="16" height="17" viewBox="0 0 16 17"><rect x="4" y="1" width="4.5" height="4.5" fill="#58c058" transform="rotate(15 6 3)"/><path d="M13 4 L8.5 9" stroke="#e03030" stroke-width="1.1"/><path d="M8 9.8 L10.6 8.8 L9 7.4Z" fill="#e03030"/><circle cx="5.5" cy="9.5" r="1.6" fill="#333"/><path d="M5.5 11 L3 16 H8 Z" fill="#555"/></svg><svg class="a" style="left:21.5px;top:196.0px" width="17" height="16" viewBox="0 0 17 16"><path d="M2 1 V14 H16" stroke="#333" stroke-width="0.9" fill="none"/><rect x="3" y="5" width="12.5" height="4" fill="#38a8e0"/><path d="M3 2 C6 10 9 12 15 12.5" stroke="#d84030" stroke-width="0.9" fill="none"/></svg><svg class="a" style="left:21.0px;top:227.0px" width="18" height="18" viewBox="0 0 18 18"><circle cx="9" cy="9" r="8" fill="none" stroke="#58c868" stroke-width="0.8"/><circle cx="9" cy="9" r="6" fill="none" stroke="#58c868" stroke-width="0.5"/><path d="M5.5 6.5 L10 4.5 L13.5 6.5 L13.5 12 L9 14 L5.5 12Z" fill="#e8e8e8" stroke="#222" stroke-width="0.7"/><path d="M5.5 6.5 L9 8.5 L13.5 6.5 M9 8.5 V14" stroke="#222" stroke-width="0.6" fill="none"/><path d="M5.5 6.5 L9 8.5 V14 L5.5 12Z" fill="#444"/></svg><div class="a" style="left:21px;top:261.5px;width:19.5px;height:19px;box-sizing:border-box;background:#8a8a8a;border:0.8px solid;border-color:#444 #ddd #ddd #444;"></div><svg class="a" style="left:22.0px;top:263.0px" width="15" height="14" viewBox="0 0 15 14"><path d="M0.5 9 L4 3 L7 11 L10 2 L14 8" stroke="#2848b8" stroke-width="1.3" fill="none"/><path d="M0.5 10.5 L4 6 L7 12.5 L10.5 5 L14 10" stroke="#38a8a0" stroke-width="1.1" fill="none"/></svg><svg class="a" style="left:23.5px;top:292.0px" width="12" height="18" viewBox="0 0 12 18"><rect x="0.6" y="0.6" width="10.8" height="16.8" fill="#f4f4f4" stroke="#333" stroke-width="0.8"/><rect x="2" y="2" width="5" height="3.5" fill="#48a848"/><path d="M2 7.5 H10 M2 9.5 H10 M2 11.5 H10 M2 13.5 H10 M2 15.3 H10" stroke="#555" stroke-width="0.7"/></svg>
<div class="a" style="left:1.7px;top:19.5px;width:0.7px;height:9.5px;background:#b4b4b4;box-shadow:0.7px 0 0 #fff;"></div><svg class="a" style="left:7.2px;top:19.5px" width="6.7" height="8.5" viewBox="0 0 10 10" preserveAspectRatio="none"><path d="M1 0.6 H6.5 L9 3 V9.4 H1Z" fill="#fff" stroke="#222" stroke-width="1.2"/></svg><svg class="a" style="left:17.7px;top:19.5px" width="7.9" height="8.5" viewBox="0 0 10 10" preserveAspectRatio="none"><path d="M0.5 3 H4 L5 4 H8 V9 H0.5Z" fill="#3a3a20"/><path d="M1.5 9 L3 5 H9.8 L8 9Z" fill="#d8c838"/><path d="M6 2 C7 0.5 8.5 0.5 9 2" stroke="#333" stroke-width="0.8" fill="none"/></svg><svg class="a" style="left:28.9px;top:19.5px" width="7.9" height="8.5" viewBox="0 0 10 10" preserveAspectRatio="none"><rect x="0.5" y="0.5" width="9" height="9" fill="#1a1a1a"/><rect x="2.5" y="0.8" width="5" height="3.4" fill="#e8e8e8"/><rect x="2.5" y="6" width="5" height="3.4" fill="#555"/></svg><div class="a" style="left:39.8px;top:19.5px;width:0.7px;height:9.5px;background:#b4b4b4;box-shadow:0.7px 0 0 #fff;"></div><svg class="a" style="left:44.5px;top:19.5px" width="4.0" height="8.5" viewBox="0 0 10 10" preserveAspectRatio="none"><path d="M2 0.5 L7 7 M8 0.5 L3 7" stroke="#a4a4a4" stroke-width="1.6" fill="none"/><circle cx="2.5" cy="8.3" r="1.6" fill="#a4a4a4"/><circle cx="7.5" cy="8.3" r="1.6" fill="#a4a4a4"/></svg><svg class="a" style="left:54.9px;top:19.5px" width="5.8" height="8.5" viewBox="0 0 10 10" preserveAspectRatio="none"><rect x="0.5" y="0.5" width="5.5" height="6" fill="#a4a4a4"/><rect x="4" y="3.5" width="5.5" height="6" fill="#d0d0d0" stroke="#a4a4a4" stroke-width="0.8"/></svg><svg class="a" style="left:65.7px;top:19.5px" width="8.3" height="8.5" viewBox="0 0 10 10" preserveAspectRatio="none"><rect x="0.5" y="1.5" width="8" height="8" fill="#2a2a2a"/><rect x="3" y="0.4" width="3.5" height="2" fill="#777"/><rect x="4" y="4.5" width="5.5" height="5" fill="#8a78d0" stroke="#223" stroke-width="0.6"/></svg><div class="a" style="left:76.6px;top:19.5px;width:0.7px;height:9.5px;background:#b4b4b4;box-shadow:0.7px 0 0 #fff;"></div><svg class="a" style="left:80.0px;top:19.5px" width="9.0" height="8.5" viewBox="0 0 10 10" preserveAspectRatio="none"><rect x="2.5" y="0.5" width="5" height="3" fill="#eee" stroke="#222" stroke-width="0.8"/><rect x="0.5" y="3" width="9" height="4.5" fill="#222"/><rect x="2" y="6.5" width="6" height="3" fill="#ddd" stroke="#222" stroke-width="0.8"/></svg><svg class="a" style="left:91.6px;top:19.5px" width="8.4" height="8.5" viewBox="0 0 10 10" preserveAspectRatio="none"><path d="M0.8 0.6 H6 L8 2.6 V9.4 H0.8Z" fill="#fff" stroke="#222" stroke-width="1.1"/><circle cx="6.5" cy="6.5" r="2" fill="#cce" stroke="#222" stroke-width="0.8"/><path d="M8 8 L9.8 9.8" stroke="#222" stroke-width="1.2"/></svg><svg class="a" style="left:104.0px;top:19.5px" width="5.0" height="8.5" viewBox="0 0 10 10" preserveAspectRatio="none"><circle cx="5" cy="3" r="2.8" fill="#d8c020" stroke="#443" stroke-width="1"/><rect x="3.8" y="5.5" width="2.4" height="4.2" fill="#443"/></svg><svg class="a" style="left:115.0px;top:19.5px" width="7.6" height="8.5" viewBox="0 0 10 10" preserveAspectRatio="none"><path d="M0.5 0.5 L0.5 7.5 L2.3 5.8 L3.8 9 L5 8.4 L3.6 5.4 L5.8 5.2Z" fill="#111"/><path d="M6 2.5 C6 0.5 9.5 0.5 9.5 2.8 C9.5 4.5 7.8 4.4 7.8 6" stroke="#2848c0" stroke-width="1.3" fill="none"/><circle cx="7.8" cy="8" r="0.9" fill="#2848c0"/></svg><div class="a" style="left:126.0px;top:19.5px;width:0.7px;height:9.5px;background:#b4b4b4;box-shadow:0.7px 0 0 #fff;"></div><svg class="a" style="left:129.0px;top:19.5px" width="8.6" height="8.5" viewBox="0 0 10 10" preserveAspectRatio="none"><circle cx="3" cy="2" r="1.8" fill="#e0c830"/><circle cx="7" cy="2" r="1.8" fill="#e0c830"/><path d="M0.3 4 H9.7 L8.5 9.6 H1.5Z" fill="#1a2a1a"/><rect x="3.8" y="4" width="2.4" height="5.6" fill="#3060c0"/></svg><div class="a" style="left:264.0px;top:19.5px;width:0.7px;height:9.5px;background:#b4b4b4;box-shadow:0.7px 0 0 #fff;"></div><svg class="a" style="left:268.0px;top:19.5px" width="7.5" height="8.5" viewBox="0 0 10 10" preserveAspectRatio="none"><path d="M0.5 0.5 H9.5 V8 L5 9.8 L0.5 8Z" fill="#e05030"/><rect x="3" y="1.5" width="4" height="6.5" fill="#9a9aa8"/></svg><svg class="a" style="left:280.5px;top:19.5px" width="5.9" height="8.5" viewBox="0 0 10 10" preserveAspectRatio="none"><rect x="0.5" y="0.5" width="9" height="9" fill="#cfcfcf"/><path d="M3 0.5 V9.5 M6.5 0.5 V9.5" stroke="#bbb" stroke-width="0.8"/></svg><svg class="a" style="left:291.4px;top:19.5px" width="7.6" height="8.5" viewBox="0 0 10 10" preserveAspectRatio="none"><rect x="0.5" y="0.5" width="9" height="9" fill="#151515"/><rect x="2.5" y="0.8" width="5" height="3.4" fill="#e8e8e8"/><rect x="2.5" y="5.8" width="5" height="3.6" fill="#2a9a4a"/></svg><svg class="a" style="left:304.8px;top:19.5px" width="4.2" height="8.5" viewBox="0 0 10 10" preserveAspectRatio="none"><path d="M2 0.5 L7 6.5 M8 0.5 L3 6.5" stroke="#223a6a" stroke-width="1.8" fill="none"/><circle cx="2.5" cy="8.2" r="1.7" fill="#223a6a"/><circle cx="7.5" cy="8.2" r="1.7" fill="#223a6a"/></svg><svg class="a" style="left:314.0px;top:19.5px" width="8.3" height="8.5" viewBox="0 0 10 10" preserveAspectRatio="none"><rect x="0.5" y="0.5" width="5.5" height="6" fill="#2a2a3a"/><rect x="4" y="3.5" width="5.5" height="6" fill="#3a9a4a" stroke="#223" stroke-width="0.6"/></svg><svg class="a" style="left:325.7px;top:19.5px" width="7.5" height="8.5" viewBox="0 0 10 10" preserveAspectRatio="none"><rect x="0.5" y="1.5" width="8" height="8" fill="#a4a4a4"/><rect x="4" y="4" width="5.5" height="5.5" fill="#dcdcdc" stroke="#aaa" stroke-width="0.6"/></svg><div class="a" style="left:336.6px;top:19.5px;width:0.7px;height:9.5px;background:#b4b4b4;box-shadow:0.7px 0 0 #fff;"></div><svg class="a" style="left:340.2px;top:19.5px" width="6.8" height="8.5" viewBox="0 0 10 10" preserveAspectRatio="none"><rect x="0.5" y="0.3" width="9" height="9.4" fill="#222"/><rect x="2" y="1.6" width="6" height="4" fill="#9a9aa8"/><circle cx="6.5" cy="4" r="1.2" fill="#e03030"/><rect x="2" y="7" width="6" height="1.5" fill="#888"/></svg><svg class="a" style="left:351.6px;top:19.5px" width="6.7" height="8.5" viewBox="0 0 10 10" preserveAspectRatio="none"><rect x="0.8" y="0.8" width="8.4" height="8.4" fill="#e4e4e4" stroke="#a4a4a4" stroke-width="1"/><rect x="3" y="3" width="4" height="4" fill="#a4a4a4"/></svg><svg class="a" style="left:363.3px;top:19.5px" width="6.7" height="8.5" viewBox="0 0 10 10" preserveAspectRatio="none"><path d="M1 0.6 H6.5 L9 3 V9.4 H1Z" fill="#e8e8e8" stroke="#a4a4a4" stroke-width="1"/><path d="M3 4 H7 M3 6 H7" stroke="#a4a4a4" stroke-width="0.8"/></svg><svg class="a" style="left:374.2px;top:19.5px" width="8.3" height="8.5" viewBox="0 0 10 10" preserveAspectRatio="none"><rect x="2.5" y="0.8" width="5" height="3" fill="#e4e4e4" stroke="#a4a4a4" stroke-width="0.8"/><rect x="0.5" y="3.2" width="9" height="4.3" fill="#a4a4a4"/><rect x="2" y="6.5" width="6" height="3" fill="#e4e4e4" stroke="#a4a4a4" stroke-width="0.8"/></svg><div class="a" style="left:386.0px;top:19.5px;width:0.7px;height:9.5px;background:#b4b4b4;box-shadow:0.7px 0 0 #fff;"></div><svg class="a" style="left:389.2px;top:19.5px" width="6.8" height="8.5" viewBox="0 0 10 10" preserveAspectRatio="none"><path d="M1 1 L9 9 M9 1 L1 9" stroke="#b8b020" stroke-width="1.8"/><circle cx="3" cy="3" r="1.8" fill="#e0d030"/><circle cx="7" cy="7" r="1.8" fill="#48a848"/><rect x="6" y="1" width="2.5" height="2.5" fill="#3858b8"/></svg><svg class="a" style="left:400.6px;top:19.5px" width="6.5" height="8.5" viewBox="0 0 10 10" preserveAspectRatio="none"><rect x="0.6" y="2" width="8.8" height="6.5" fill="#2a9a3a"/><ellipse cx="5" cy="8.5" rx="4.4" ry="1.4" fill="#2a9a3a"/><ellipse cx="5" cy="2" rx="4.4" ry="1.6" fill="#3060c0"/></svg><svg class="a" style="left:411.5px;top:20.5px" width="7.8" height="7.0" viewBox="0 0 10 10" preserveAspectRatio="none"><path d="M0.5 2.5 L4 5 L0.5 7.5Z M9.5 2.5 L6 5 L9.5 7.5Z" fill="#111"/><rect x="3.6" y="1.5" width="2.8" height="7" fill="#111"/></svg><svg class="a" style="left:422.7px;top:19.5px" width="8.7" height="8.5" viewBox="0 0 10 10" preserveAspectRatio="none"><rect x="0.5" y="0.5" width="9" height="9" fill="#1a1a2a"/><rect x="2" y="1.8" width="6" height="5" fill="#e8d050"/><rect x="4.5" y="1.8" width="2" height="5" fill="#4068c8"/><rect x="2" y="1.8" width="2" height="2.5" fill="#e08a40"/></svg><svg class="a" style="left:434.4px;top:20.5px" width="8.3" height="7.0" viewBox="0 0 10 10" preserveAspectRatio="none"><rect x="0.5" y="1" width="9" height="7.5" rx="1" fill="#e07838"/><rect x="1.8" y="3" width="6.4" height="3.4" fill="#e8d8f0" stroke="#5a3a8a" stroke-width="0.7"/></svg><svg class="a" style="left:446.0px;top:19.5px" width="8.0" height="8.5" viewBox="0 0 10 10" preserveAspectRatio="none"><rect x="0.5" y="1" width="4" height="3" fill="#334"/><rect x="4" y="1.5" width="5.5" height="5" fill="#3a78d0"/><rect x="6" y="0.8" width="2.5" height="2.5" fill="#e8d040"/><path d="M2 4 V8 H5" stroke="#334" stroke-width="0.8" fill="none"/><rect x="5" y="6.5" width="3" height="2.5" fill="#556"/></svg><svg class="a" style="left:457.8px;top:20.5px" width="7.0" height="7.0" viewBox="0 0 10 10" preserveAspectRatio="none"><rect x="0.5" y="1.5" width="4.5" height="3.5" fill="#1a2a5a"/><rect x="5" y="4.5" width="4.5" height="4" fill="#1a2a5a"/><path d="M3 5 V6.5 H5" stroke="#1a2a5a" stroke-width="0.9" fill="none"/></svg><div class="a" style="left:471.5px;top:19.5px;width:0.7px;height:9.5px;background:#b4b4b4;box-shadow:0.7px 0 0 #fff;"></div><div class="a" style="left:473.3px;top:19.5px;width:0.7px;height:9.5px;background:#b4b4b4;box-shadow:0.7px 0 0 #fff;"></div><svg class="a" style="left:476.5px;top:19.5px" width="6.7" height="8.5" viewBox="0 0 10 10" preserveAspectRatio="none"><path d="M4.2 0.3 L9.4 0.3 L7.8 3.6 L2.6 3.6 Z M3.2 4.3 L7 4.3 L4 9.6 L1.4 9.6 L2.6 6.6 L2.2 6.6Z" fill="#111"/></svg><svg class="a" style="left:489.0px;top:19.5px" width="6.0" height="8.5" viewBox="0 0 10 10" preserveAspectRatio="none"><path d="M4.2 0.3 L9.4 0.3 L7.8 3.6 L2.6 3.6 Z M3.2 4.3 L7 4.3 L4 9.6 L1.4 9.6 L2.6 6.6 L2.2 6.6Z" fill="#a4a4a4"/></svg><svg class="a" style="left:500.8px;top:19.5px" width="6.7" height="8.5" viewBox="0 0 10 10" preserveAspectRatio="none"><path d="M4.2 0.3 L9.4 0.3 L7.8 3.6 L2.6 3.6 Z M3.2 4.3 L7 4.3 L4 9.6 L1.4 9.6 L2.6 6.6 L2.2 6.6Z" fill="#a4a4a4"/><path d="M6 6 L9.5 6 L7.8 9.5Z" fill="#a4a4a4"/></svg><svg class="a" style="left:513.0px;top:19.5px" width="5.3" height="8.5" viewBox="0 0 10 10" preserveAspectRatio="none"><path d="M4.2 0.3 L9.4 0.3 L7.8 3.6 L2.6 3.6 Z M3.2 4.3 L7 4.3 L4 9.6 L1.4 9.6 L2.6 6.6 L2.2 6.6Z" fill="#a4a4a4"/></svg><svg class="a" style="left:525.0px;top:19.5px" width="5.4" height="8.5" viewBox="0 0 10 10" preserveAspectRatio="none"><path d="M4.2 0.3 L9.4 0.3 L7.8 3.6 L2.6 3.6 Z M3.2 4.3 L7 4.3 L4 9.6 L1.4 9.6 L2.6 6.6 L2.2 6.6Z" fill="#a4a4a4"/></svg><svg class="a" style="left:536.0px;top:19.5px" width="7.4" height="8.5" viewBox="0 0 10 10" preserveAspectRatio="none"><path d="M4.2 0.3 L9.4 0.3 L7.8 3.6 L2.6 3.6 Z M3.2 4.3 L7 4.3 L4 9.6 L1.4 9.6 L2.6 6.6 L2.2 6.6Z" fill="#a4a4a4"/><path d="M5.5 5.5 L9.8 5.5 L7.6 9.6Z" fill="#a4a4a4"/></svg><svg class="a" style="left:548.4px;top:19.5px" width="6.6" height="8.5" viewBox="0 0 10 10" preserveAspectRatio="none"><rect x="0.5" y="0.5" width="9" height="9" fill="#a4a4a4"/><rect x="2.5" y="0.8" width="5" height="3.4" fill="#e8e8e8"/><rect x="2.5" y="6" width="5" height="3.4" fill="#d8d8d8"/></svg><svg class="a" style="left:559.3px;top:19.5px" width="8.2" height="8.5" viewBox="0 0 10 10" preserveAspectRatio="none"><path d="M1 0.5 V9.3 H9.5" stroke="#111" stroke-width="1.2" fill="none"/><path d="M2.5 9 V1.5 L4.5 1.5 V9" fill="#222"/><path d="M5 2 L8 7.5" stroke="#e04828" stroke-width="1.5"/></svg><svg class="a" style="left:572.2px;top:19.5px" width="7.5" height="8.5" viewBox="0 0 10 10" preserveAspectRatio="none"><rect x="0.4" y="0.5" width="9.2" height="9" fill="#777"/><rect x="1.2" y="1" width="2.4" height="8" fill="#e07030"/><rect x="3.8" y="1" width="2.4" height="8" fill="#e0c030"/><rect x="6.4" y="1" width="2.4" height="8" fill="#48a848"/></svg><svg class="a" style="left:583.0px;top:19.5px" width="8.4" height="8.5" viewBox="0 0 10 10" preserveAspectRatio="none"><rect x="0.3" y="0.3" width="9.4" height="9.4" fill="#12303a"/><rect x="1.5" y="4.5" width="7" height="1" fill="#e8e8e8"/><rect x="3" y="6.5" width="5" height="1.6" fill="#d8c840"/></svg><svg class="a" style="left:595.6px;top:19.5px" width="7.9" height="8.5" viewBox="0 0 10 10" preserveAspectRatio="none"><rect x="0.4" y="0.6" width="9.2" height="8.8" fill="#e8e8e8"/><path d="M0.4 0.6 H9.6 L0.4 6Z" fill="#2a9a4a"/><path d="M0.4 9.4 H9.6 V6.5 L5 7.5 L0.4 6Z" fill="#d83030"/><path d="M2 3.5 L7 6.5" stroke="#222" stroke-width="1"/></svg><svg class="a" style="left:609.0px;top:19.5px" width="5.9" height="8.5" viewBox="0 0 10 10" preserveAspectRatio="none"><path d="M5 0.5 V7 M3 7 H7 V9.5 H3Z" stroke="#a4a4a4" stroke-width="1.2" fill="#ddd"/></svg><div class="a" style="left:619.0px;top:19.5px;width:0.7px;height:9.5px;background:#b4b4b4;box-shadow:0.7px 0 0 #fff;"></div><svg class="a" style="left:622.4px;top:19.5px" width="7.5" height="8.5" viewBox="0 0 10 10" preserveAspectRatio="none"><path d="M0.8 6 C1.5 2 4 1 8.5 1.2 L8.5 3 C6 2.6 4 3.5 3.2 6.5Z" fill="#a4a4a4"/><path d="M7.2 3 V9.2" stroke="#a4a4a4" stroke-width="1"/></svg><svg class="a" style="left:634.0px;top:19.5px" width="7.6" height="8.5" viewBox="0 0 10 10" preserveAspectRatio="none"><path d="M0.8 6 C1.5 2 4 1 8.5 1.2 L8.5 3 C6 2.6 4 3.5 3.2 6.5Z" fill="#a4a4a4"/><path d="M7.2 3 V9.2" stroke="#a4a4a4" stroke-width="1"/></svg><svg class="a" style="left:645.8px;top:19.5px" width="8.2" height="8.5" viewBox="0 0 10 10" preserveAspectRatio="none"><path d="M0.8 6 C1.5 2 4 1 8.5 1.2 L8.5 3 C6 2.6 4 3.5 3.2 6.5Z" fill="#a4a4a4"/><path d="M7.2 3 V9.2" stroke="#a4a4a4" stroke-width="1"/></svg><div class="a" style="left:657.5px;top:19.5px;width:0.7px;height:9.5px;background:#b4b4b4;box-shadow:0.7px 0 0 #fff;"></div><svg class="a" style="left:660.8px;top:19.5px" width="7.6" height="8.5" viewBox="0 0 10 10" preserveAspectRatio="none"><path d="M5 0.5 L6.8 3 H5.8 V4.2 H7 V3.2 L9.5 5 L7 6.8 V5.8 H5.8 V7 H6.8 L5 9.5 L3.2 7 H4.2 V5.8 H3 V6.8 L0.5 5 L3 3.2 V4.2 H4.2 V3 H3.2Z" fill="#a4a4a4"/></svg><div class="a" style="left:672.5px;top:19.5px;width:0.7px;height:9.5px;background:#b4b4b4;box-shadow:0.7px 0 0 #fff;"></div><svg class="a" style="left:675.9px;top:19.5px" width="7.5" height="8.5" viewBox="0 0 10 10" preserveAspectRatio="none"><circle cx="5" cy="5" r="4.4" fill="#a4a4a4"/><circle cx="5" cy="5" r="2" fill="#d8d8d8"/></svg><svg class="a" style="left:687.6px;top:19.5px" width="8.4" height="8.5" viewBox="0 0 10 10" preserveAspectRatio="none"><circle cx="5" cy="5" r="4.4" fill="#a4a4a4"/><rect x="3" y="3" width="4" height="4" fill="#d4d4d4"/></svg><div class="a" style="left:699.3px;top:19.5px;width:0.7px;height:9.5px;background:#b4b4b4;box-shadow:0.7px 0 0 #fff;"></div><svg class="a" style="left:702.6px;top:19.5px" width="7.9" height="8.5" viewBox="0 0 10 10" preserveAspectRatio="none"><rect x="0.4" y="0.6" width="9.2" height="8.8" fill="#5a4aa0"/><rect x="2" y="3" width="2.2" height="5.5" fill="#f0f0f8"/><rect x="5.4" y="4.5" width="2.2" height="4" fill="#f0f0f8"/><rect x="5.8" y="1.5" width="2.4" height="2" fill="#e04838"/></svg><div class="a" style="left:853.0px;top:19.5px;width:0.7px;height:9.5px;background:#b4b4b4;box-shadow:0.7px 0 0 #fff;"></div><div class="a" style="left:854.8px;top:19.5px;width:0.7px;height:9.5px;background:#b4b4b4;box-shadow:0.7px 0 0 #fff;"></div><svg class="a" style="left:860.4px;top:20.0px" width="6.3" height="6.8" viewBox="0 0 10 10" preserveAspectRatio="none"><rect x="0.5" y="0.5" width="9" height="9" fill="#8c8c8c"/></svg><svg class="a" style="left:871.7px;top:20.0px" width="6.3" height="6.8" viewBox="0 0 10 10" preserveAspectRatio="none"><rect x="0.5" y="0.5" width="4" height="9" fill="#8c8c8c"/><rect x="5.5" y="0.5" width="4" height="9" fill="#8c8c8c"/></svg><svg class="a" style="left:882.5px;top:20.0px" width="6.8" height="6.8" viewBox="0 0 10 10" preserveAspectRatio="none"><rect x="0.3" y="0.5" width="2.6" height="9" fill="#8c8c8c"/><rect x="3.7" y="0.5" width="2.6" height="9" fill="#8c8c8c"/><rect x="7.1" y="0.5" width="2.6" height="9" fill="#8c8c8c"/></svg><svg class="a" style="left:893.5px;top:20.0px" width="7.0" height="6.8" viewBox="0 0 10 10" preserveAspectRatio="none"><rect x="0.5" y="0.5" width="4" height="9" fill="#8c8c8c"/><rect x="5.5" y="0.5" width="4" height="4" fill="#8c8c8c"/><rect x="5.5" y="5.5" width="4" height="4" fill="#aaa"/></svg><svg class="a" style="left:905.6px;top:20.0px" width="6.2" height="6.8" viewBox="0 0 10 10" preserveAspectRatio="none"><rect x="0.5" y="0.5" width="4" height="9" fill="#8c8c8c"/><rect x="5.5" y="0.5" width="4" height="9" fill="#9a9a9a"/><path d="M5.5 5 H9.5 M2.5 0.5 V9.5" stroke="#ddd" stroke-width="0.7"/></svg><div class="a" style="left:915.6px;top:19.5px;width:0.7px;height:9.5px;background:#b4b4b4;box-shadow:0.7px 0 0 #fff;"></div><svg class="a" style="left:921.0px;top:20.0px" width="3.6" height="7.0" viewBox="0 0 10 10" preserveAspectRatio="none"><path d="M1 0.5 H9 M5 0.5 V9.5 M1 9.5 H9" stroke="#9a9a9a" stroke-width="2" fill="none"/></svg><svg class="a" style="left:932.0px;top:20.4px" width="6.2" height="6.0" viewBox="0 0 10 10" preserveAspectRatio="none"><rect x="0.8" y="0.8" width="8.4" height="8.4" fill="#f4f4f4" stroke="#c4c4c4" stroke-width="1.2"/></svg><svg class="a" style="left:942.0px;top:20.2px" width="8.7" height="6.8" viewBox="0 0 10 10" preserveAspectRatio="none"><path d="M0.8 9 V0.8 H9.2 V9" fill="none" stroke="#a8a8a8" stroke-width="1.2" stroke-dasharray="1.5 1"/><path d="M0.8 0.8 H9.2" stroke="#999" stroke-width="1.4"/></svg>
<div class="a" style="left:0;top:541px;width:955px;height:8.2px;background:#f1f1f1;overflow:hidden;"><div class="t" style="left:2.0px;top:5.2px;font-size:6.20px;color:#333;transform:scaleX(0.896);transform-origin:0 0;">For Help, press F1</div><div class="a" style="left:932.5px;top:3.3px;width:8px;height:1.6px;background:#222;"></div><div class="a" style="left:943.3px;top:3.3px;width:7px;height:1.6px;background:#334;"></div></div><div class="a" style="left:0;top:549px;width:955px;height:1.4px;background:#9c1f9e;"></div><div class="a" style="left:0;top:550.4px;width:955px;height:3px;background:#fafafa;"></div><svg class="a" style="left:748px;top:488px" width="207" height="62" viewBox="750 490 207 62" font-family="Liberation Sans, sans-serif"><defs><linearGradient id="ag" x1="0" y1="1" x2="1" y2="0"><stop offset="0" stop-color="#c8101c"/><stop offset="0.55" stop-color="#e8281c"/><stop offset="1" stop-color="#f58a1c"/></linearGradient></defs><path d="M 756.1 536.5 L 790.0 502.5 Q 793.3 498.7 799.3 498.2 L 813.2 498.2 L 804.5 526.3 L 780.7 526.3 L 773.4 536.5 Z M 785.9 520.7 L 796.7 509.0 L 793.3 520.7 Z " fill="url(#ag)" fill-rule="evenodd"/><path d="M 804.1 527.6 Q 822.5 528.1 833.9 514.2 Q 823.5 522.9 806.7 522.4 Z " fill="#e43a1c"/><text transform="translate(779.5 536.6) skewX(-14)" x="0" y="0" font-size="10.4" font-weight="bold" fill="#a01018" stroke="#fff" stroke-width="0.9" paint-order="stroke" textLength="46" lengthAdjust="spacingAndGlyphs">CCEXP</text><text transform="translate(839.6 512.6) skewX(-10)" x="0" y="0" font-family="Liberation Sans, Noto Sans CJK SC, sans-serif" font-size="16.5" font-weight="900" fill="#e01420" textLength="109" lengthAdjust="spacingAndGlyphs">艾克赛普</text><text transform="translate(835.4 526.2) skewX(-10)" x="0" y="0" font-family="Liberation Sans, Noto Sans CJK SC, sans-serif" font-size="8.2" fill="#2a2a2a" textLength="112.6" lengthAdjust="spacingAndGlyphs">测试 · 仪器 · 工控 · 集成</text><text x="837.6" y="538" font-size="12.2" font-weight="bold" font-style="italic" fill="#0a0a0a" textLength="108.5" lengthAdjust="spacingAndGlyphs">www.hncsw.net</text></svg>
</div></body></html>
